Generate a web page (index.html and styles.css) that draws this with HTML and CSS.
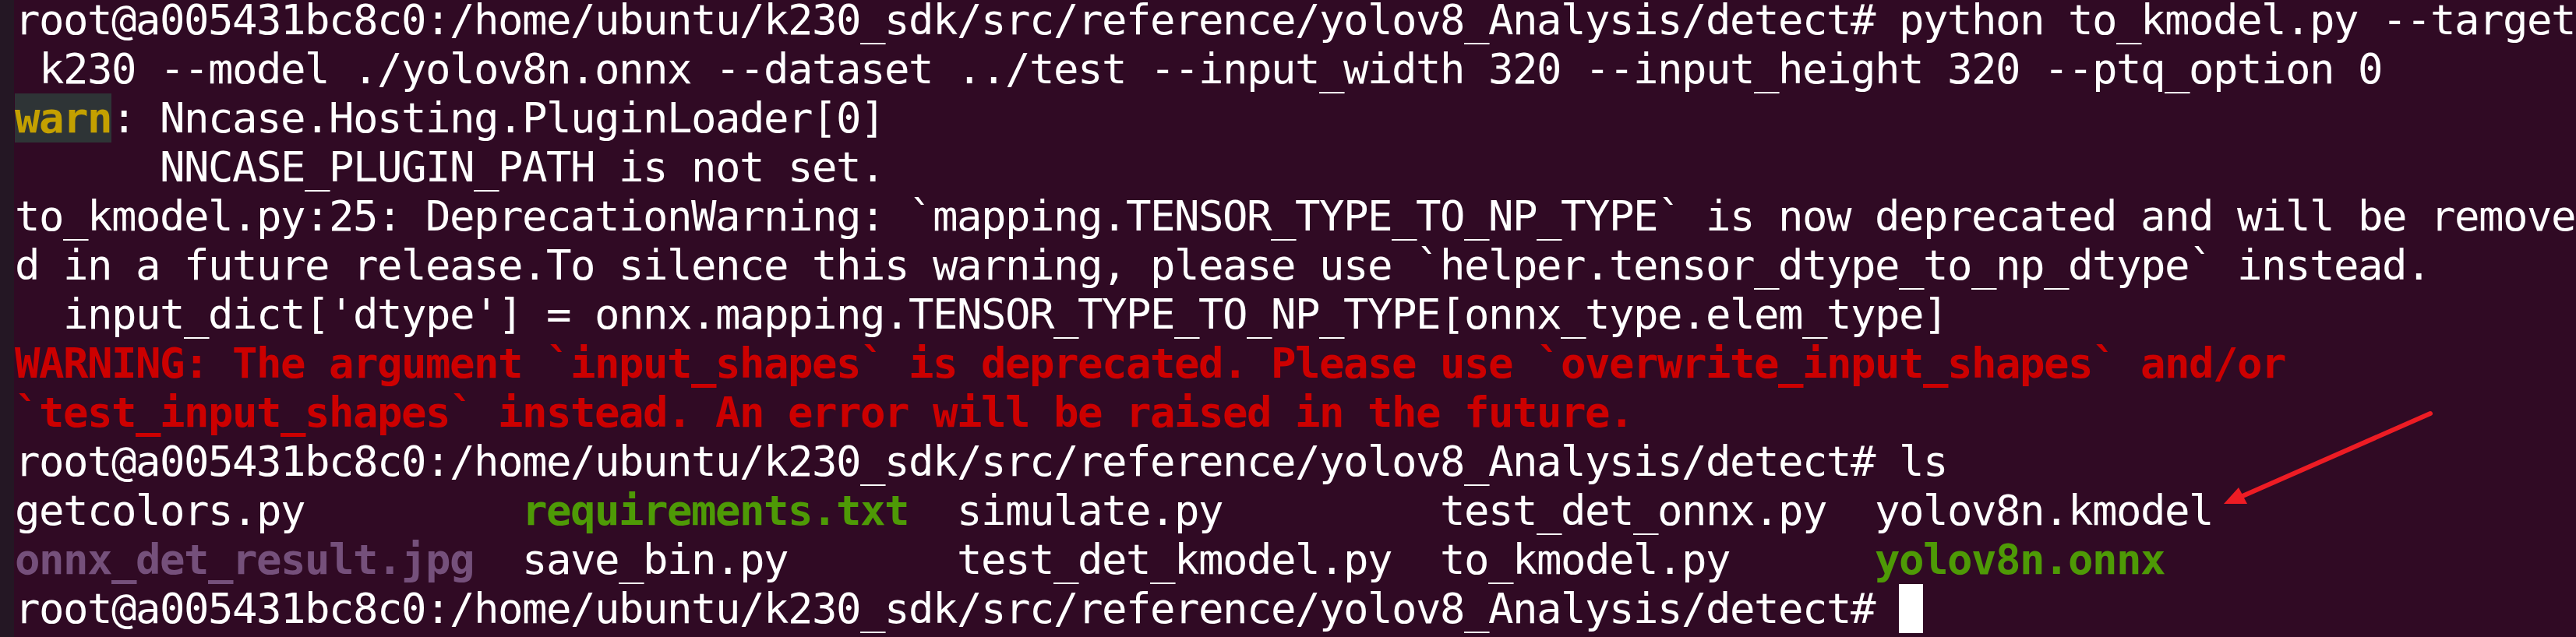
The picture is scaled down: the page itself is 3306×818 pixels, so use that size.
FILE: index.html
```html
<!DOCTYPE html>
<html>
<head>
<meta charset="utf-8">
<link rel="stylesheet" href="styles.css">
</head>
<body>
<div class="window">
  <div class="edge"></div>
  <div class="term">
<div class="row">root@a005431bc8c0:/home/ubuntu/k230_sdk/src/reference/yolov8_Analysis/detect# python to_kmodel.py --target</div>
<div class="row"> k230 --model ./yolov8n.onnx --dataset ../test --input_width 320 --input_height 320 --ptq_option 0</div>
<div class="row"><span class="warn">warn</span>: Nncase.Hosting.PluginLoader[0]</div>
<div class="row">      NNCASE_PLUGIN_PATH is not set.</div>
<div class="row">to_kmodel.py:25: DeprecationWarning: `mapping.TENSOR_TYPE_TO_NP_TYPE` is now deprecated and will be remove</div>
<div class="row">d in a future release.To silence this warning, please use `helper.tensor_dtype_to_np_dtype` instead.</div>
<div class="row">  input_dict['dtype'] = onnx.mapping.TENSOR_TYPE_TO_NP_TYPE[onnx_type.elem_type]</div>
<div class="row red">WARNING: The argument `input_shapes` is deprecated. Please use `overwrite_input_shapes` and/or</div>
<div class="row red">`test_input_shapes` instead. An error will be raised in the future.</div>
<div class="row">root@a005431bc8c0:/home/ubuntu/k230_sdk/src/reference/yolov8_Analysis/detect# ls</div>
<div class="row">getcolors.py         <span class="green">requirements.txt</span>  simulate.py         test_det_onnx.py  yolov8n.kmodel</div>
<div class="row"><span class="purple">onnx_det_result.jpg</span>  save_bin.py       test_det_kmodel.py  to_kmodel.py      <span class="green">yolov8n.onnx</span></div>
<div class="row">root@a005431bc8c0:/home/ubuntu/k230_sdk/src/reference/yolov8_Analysis/detect# <span class="cursor"></span></div>
  </div>
  <svg class="arrow" width="280" height="130" viewBox="0 0 280 130">
    <line x1="269" y1="6" x2="28" y2="112" stroke="#ed1c24" stroke-width="6" stroke-linecap="round"/>
    <polygon points="4,122 23,101 34,122" fill="#ed1c24"/>
  </svg>
</div>
</body>
</html>
```

FILE: styles.css
```css
html, body {
  margin: 0;
  padding: 0;
  background: #300a24;
  overflow: hidden;
}
.window {
  position: relative;
  display: flex;
  width: 3306px;
  height: 818px;
  overflow: hidden;
  background: #300a24;
}
.edge {
  flex: 0 0 18px;
  background: #241724;
}
.term {
  flex: 1;
  padding-left: 1px;
  margin-top: -6px;
  font-family: "DejaVu Sans Mono", "Liberation Mono", monospace;
  font-size: 54px;
  letter-spacing: -1.51px;
  line-height: 63px;
  color: #ffffff;
}
.row {
  white-space: pre;
  height: 63px;
}
.red {
  color: #cc0000;
  font-weight: bold;
}
.green {
  color: #4e9a06;
  font-weight: bold;
}
.purple {
  color: #75507b;
  font-weight: bold;
}
.warn {
  display: inline-block;
  color: #c4a000;
  background: #2e3436;
  font-weight: bold;
  height: 63px;
  vertical-align: top;
}
.cursor {
  display: inline-block;
  width: 31px;
  height: 63px;
  background: #ffffff;
  vertical-align: top;
}
.arrow {
  position: absolute;
  left: 2850px;
  top: 525px;
}
```
